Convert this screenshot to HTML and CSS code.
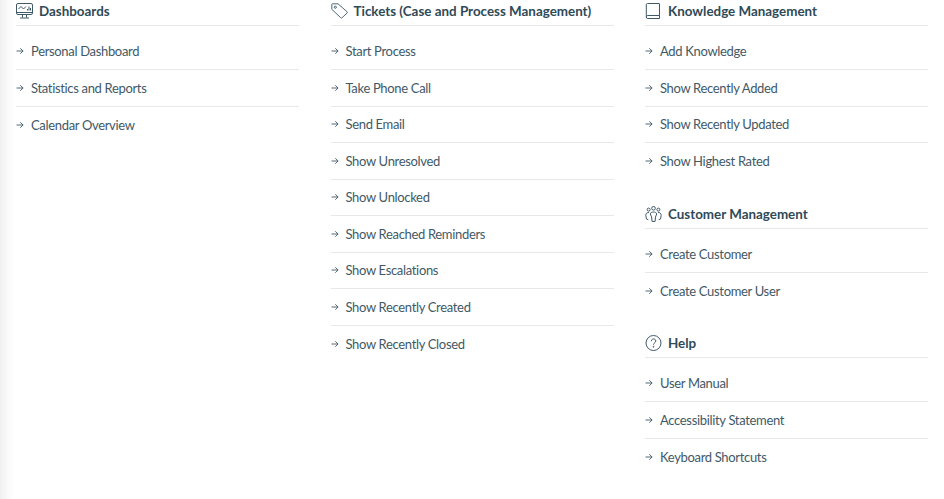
FILE: index.html
```html
<!DOCTYPE html>
<html lang="en">
<head>
<meta charset="utf-8">
<title>Overview</title>
<link rel="stylesheet" href="styles.css">
</head>
<body>
<svg class="defs" width="0" height="0" aria-hidden="true">
  <symbol id="arrow" viewBox="0 0 8 8"><path d="M.5 4h6.600M4.300 1.300 7.100 4 4.300 6.700" fill="none" stroke="currentColor" stroke-width=".9"/></symbol>
</svg>
<main class="columns">
  <div class="column">
    <section class="group">
      <h2 class="title"><svg class="icon" viewBox="0 0 17 16" fill="none" stroke="currentColor" stroke-width="1"><rect x=".5" y=".5" width="16" height="11" rx="1.500"/><path d="M.5 9.500h16M2.500 6 5 3.500l2.500 2.500L10 3.500M11.500 7.500V6M13 7.500V3.500M14.500 7.500V5M6.500 11.500v3M10.500 11.500v3M4 15h9"/></svg><span class="title-text">Dashboards</span></h2>
      <ul class="list">
        <li class="row"><svg class="arrow"><use href="#arrow"/></svg>Personal Dashboard</li>
        <li class="row"><svg class="arrow"><use href="#arrow"/></svg>Statistics and Reports</li>
        <li class="row"><svg class="arrow"><use href="#arrow"/></svg>Calendar Overview</li>
      </ul>
    </section>
  </div>
  <div class="column">
    <section class="group">
      <h2 class="title"><svg class="icon" viewBox="0 0 17 16" fill="none" stroke="currentColor" stroke-width=".9"><path d="M.8 1.500v4.800L9.700 14.700a1 1 0 0 0 1.400 0l4.900-4.600a1 1 0 0 0 0-1.400L7 .8H1.500a.7.7 0 0 0-.7.7z"/><circle cx="4.300" cy="4.200" r="1.100"/></svg><span class="title-text">Tickets (Case and Process Management)</span></h2>
      <ul class="list">
        <li class="row"><svg class="arrow"><use href="#arrow"/></svg>Start Process</li>
        <li class="row"><svg class="arrow"><use href="#arrow"/></svg>Take Phone Call</li>
        <li class="row"><svg class="arrow"><use href="#arrow"/></svg>Send Email</li>
        <li class="row"><svg class="arrow"><use href="#arrow"/></svg>Show Unresolved</li>
        <li class="row"><svg class="arrow"><use href="#arrow"/></svg>Show Unlocked</li>
        <li class="row"><svg class="arrow"><use href="#arrow"/></svg>Show Reached Reminders</li>
        <li class="row"><svg class="arrow"><use href="#arrow"/></svg>Show Escalations</li>
        <li class="row"><svg class="arrow"><use href="#arrow"/></svg>Show Recently Created</li>
        <li class="row"><svg class="arrow"><use href="#arrow"/></svg>Show Recently Closed</li>
      </ul>
    </section>
  </div>
  <div class="column">
    <section class="group">
      <h2 class="title"><svg class="icon" viewBox="0 0 17 16" fill="none" stroke="currentColor" stroke-width="1"><path d="M2.500 .5h11.500a.5.5 0 0 1 .5.5v11.500H2.800a1.500 1.500 0 0 0-1.500 1.300V1.700a1.200 1.200 0 0 1 1.200-1.200zM1.300 13.800a1.500 1.500 0 0 0 1.500 1.700h11.700v-3"/></svg><span class="title-text">Knowledge Management</span></h2>
      <ul class="list">
        <li class="row"><svg class="arrow"><use href="#arrow"/></svg>Add Knowledge</li>
        <li class="row"><svg class="arrow"><use href="#arrow"/></svg>Show Recently Added</li>
        <li class="row"><svg class="arrow"><use href="#arrow"/></svg>Show Recently Updated</li>
        <li class="row"><svg class="arrow"><use href="#arrow"/></svg>Show Highest Rated</li>
      </ul>
    </section>
    <section class="group">
      <h2 class="title"><svg class="icon" viewBox="0 0 17 16" fill="none" stroke="currentColor" stroke-width="1"><circle cx="8.500" cy="2.300" r="1.800"/><circle cx="3.600" cy="3.600" r="1.500"/><circle cx="13.400" cy="3.600" r="1.500"/><path d="M5.300 8c0-2.600 6.400-2.600 6.400 0l-1.200 3-.4 4.400H7l-.4-4.400zM3.300 13.800 1.500 13 .8 9.500c-.2-2 1.500-3.200 3.200-3M13.700 13.800l1.800-.8.700-3.500c.2-2-1.500-3.200-3.200-3"/></svg><span class="title-text">Customer Management</span></h2>
      <ul class="list">
        <li class="row"><svg class="arrow"><use href="#arrow"/></svg>Create Customer</li>
        <li class="row"><svg class="arrow"><use href="#arrow"/></svg>Create Customer User</li>
      </ul>
    </section>
    <section class="group">
      <h2 class="title"><svg class="icon" viewBox="0 0 17 16" fill="none" stroke="currentColor" stroke-width="1"><circle cx="8.500" cy="8" r="7.500"/><path d="M6.300 6.200c0-3 4.500-3 4.500-.2 0 1.800-2.300 1.800-2.300 3.700"/><circle cx="8.500" cy="11.800" r=".5"/></svg><span class="title-text">Help</span></h2>
      <ul class="list">
        <li class="row"><svg class="arrow"><use href="#arrow"/></svg>User Manual</li>
        <li class="row"><svg class="arrow"><use href="#arrow"/></svg>Accessibility Statement</li>
        <li class="row"><svg class="arrow"><use href="#arrow"/></svg>Keyboard Shortcuts</li>
      </ul>
    </section>
  </div>
</main>
</body>
</html>
```
FILE: styles.css
```css
* { box-sizing: border-box; }
html, body { margin: 0; height: 100%; overflow: hidden; }
body {
  background: linear-gradient(to right, #f0f0f0 0, #fafafa 8px, #fff 15px);
  font-family: "Lato", "Liberation Sans", sans-serif;
  color: #3f5966;
}
.defs { position: absolute; }
.columns {
  display: grid;
  grid-template-columns: repeat(3, 283px);
  column-gap: 31.5px;
  padding-left: 16px;
}
.group { margin-bottom: 23px; }
.title {
  display: flex;
  align-items: center;
  height: 26px;
  margin: 0;
  padding-bottom: 3px;
  border-bottom: 1px solid #e6e8e9;
  font-size: 13.4px;
  font-weight: 700;
  color: #2f4a57;
}
.icon { width: 17px; height: 16px; flex: none; margin-right: 6px; color: #3f5966; }
.list { list-style: none; margin: 7.5px 0 0; padding: 0; }
.row {
  display: flex;
  align-items: center;
  height: 36.5px;
  border-bottom: 1px solid #e6e8e9;
  font-size: 13px;
  letter-spacing: -.33px;
}
.row:last-child { border-bottom: 0; }
.arrow { width: 8px; height: 8px; flex: none; margin-right: 7px; }
```
